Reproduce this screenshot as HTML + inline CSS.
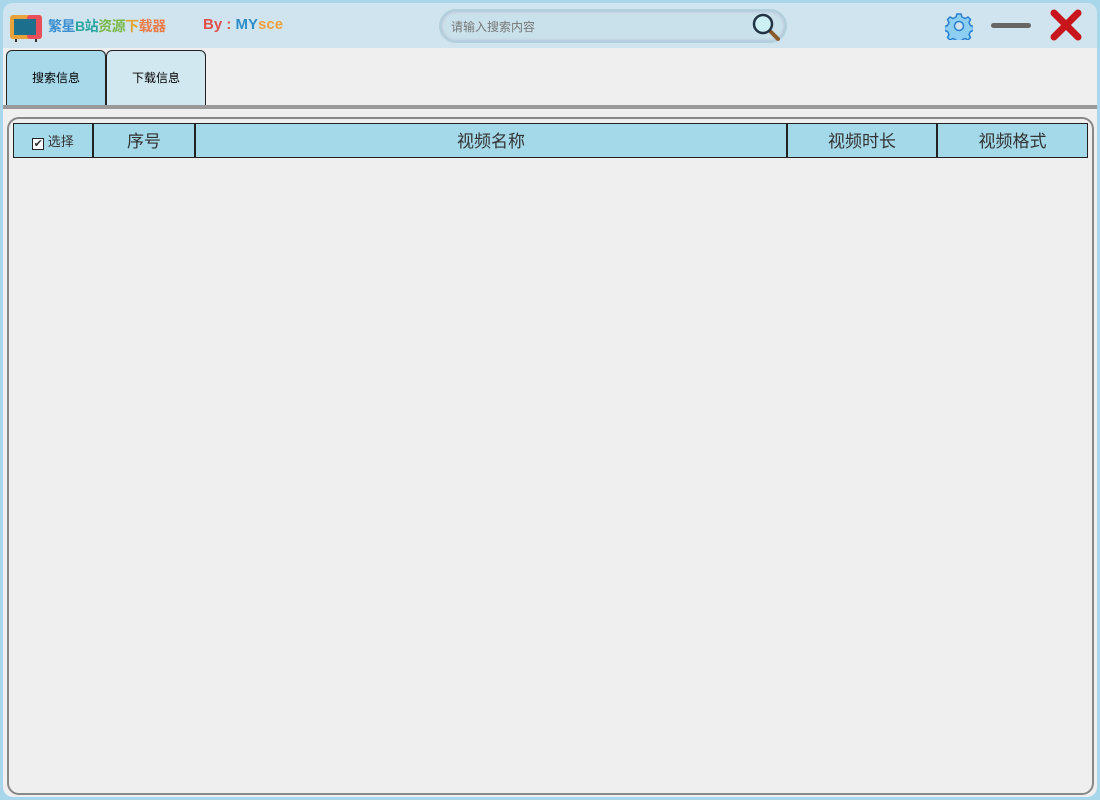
<!DOCTYPE html>
<html><head><meta charset="utf-8"><style>
*{margin:0;padding:0;box-sizing:border-box}
body{width:1100px;height:800px;background:#a8d6ea;overflow:hidden;font-family:"Liberation Sans","Noto Sans CJK SC",sans-serif;position:relative}
.win{position:absolute;left:3px;top:3px;width:1094px;height:794px;border-radius:10px;background:#efefef;overflow:hidden}
.top{position:absolute;left:0;top:0;width:100%;height:45px;background:#cfe4ee}
.title{position:absolute;left:45px;top:13px;font-size:14px;font-weight:bold;letter-spacing:-0.5px}
.by{position:absolute;left:200px;top:13px;font-size:15px;font-weight:bold}
.search{position:absolute;left:436px;top:6px;width:348px;height:34px;border-radius:17px;background:#c9e1ea;border:2px solid #b2cfdc;box-shadow:inset 0 0 3px #aac}
.search span{position:absolute;left:10px;top:7px;font-size:12px;color:#777}
.tab{position:absolute;top:47px;height:55px;width:100px;border:1px solid #222;border-bottom:none;border-radius:6px 6px 0 0;font-size:12px;text-align:center;line-height:54px}
.sep{position:absolute;left:0;top:102px;width:100%;height:4px;background:#999}
.panel{position:absolute;left:4px;top:114px;width:1087px;height:678px;border:2px solid #888;border-radius:12px}
.hdr{position:absolute;left:10px;top:120px;height:35px;background:#a4d9ea;border:1px solid #222;display:flex}
.hdr div{border-right:2px solid #222;text-align:center;font-size:17px;line-height:35px;color:#333}
.hdr div:last-child{border-right:none}
</style></head><body>
<div class="win">
<div class="top">
<svg style="position:absolute;left:6px;top:10px" width="34" height="30"><rect x="1" y="2" width="32" height="24" rx="3" fill="#e9a13a"/><rect x="18" y="2" width="15" height="24" rx="3" fill="#e94f5a"/><rect x="5" y="6" width="22" height="16" fill="#1c6f8d"/><rect x="6" y="26" width="2" height="3" fill="#333"/><rect x="26" y="26" width="2" height="3" fill="#333"/></svg>
<div class="title"><span style="color:#3a8fd0">繁星</span><span style="color:#29a5a0">B站</span><span style="color:#7ab84a">资源</span><span style="color:#e2a42e">下</span><span style="color:#ea7c4a">载器</span></div>
<div class="by"><span style="color:#e3504a">By : </span><span style="color:#2c8ec9">MY</span><span style="color:#f0a040">sce</span></div>
<div class="search"><span>请输入搜索内容</span>
<svg style="position:absolute;left:310px;top:1px" width="32" height="30"><line x1="17" y1="17" x2="27" y2="27" stroke="#8a5a2a" stroke-width="4" stroke-linecap="round"/><circle cx="12" cy="12" r="9" fill="#cdf0f5" stroke="#234" stroke-width="2.5"/></svg></div>
<svg style="position:absolute;left:942px;top:9px" width="28" height="28" viewBox="0 0 28 28"><path d="M12 2h4l1 3 3 1.5 3-1.5 2.5 2.5-1.5 3 1.5 3 3 1v4l-3 1-1.5 3 1.5 3-2.5 2.5-3-1.5-3 1.5-1 3h-4l-1-3-3-1.5-3 1.5-2.5-2.5 1.5-3-1.5-3-3-1v-4l3-1 1.5-3-1.5-3 2.5-2.5 3 1.5 3-1.5z" fill="#8ccff3" stroke="#2a7fd0" stroke-width="1.5"/><circle cx="14" cy="14" r="4.5" fill="#cfe4ee" stroke="#2a7fd0" stroke-width="1.5"/></svg>
<div style="position:absolute;left:988px;top:20px;width:40px;height:5px;border-radius:3px;background:#666"></div>
<svg style="position:absolute;left:1046px;top:5px" width="34" height="34"><path d="M5 5L29 29M29 5L5 29" stroke="#c8151b" stroke-width="7" stroke-linecap="round"/></svg>
</div>
<div class="tab" style="left:3px;background:#a8d9eb">搜索信息</div>
<div class="tab" style="left:103px;background:#d2e8f0">下载信息</div>
<div class="sep"></div>
<div class="panel"></div>
<div class="hdr">
<div style="width:80px;font-size:13px"><span style="display:inline-block;width:12px;height:12px;border:1px solid #222;background:#fff;font-size:11px;line-height:11px;vertical-align:-1px">✔</span> 选择</div>
<div style="width:102px">序号</div>
<div style="width:592px">视频名称</div>
<div style="width:150px">视频时长</div>
<div style="width:149px">视频格式</div>
</div>
</div>
</body></html>
